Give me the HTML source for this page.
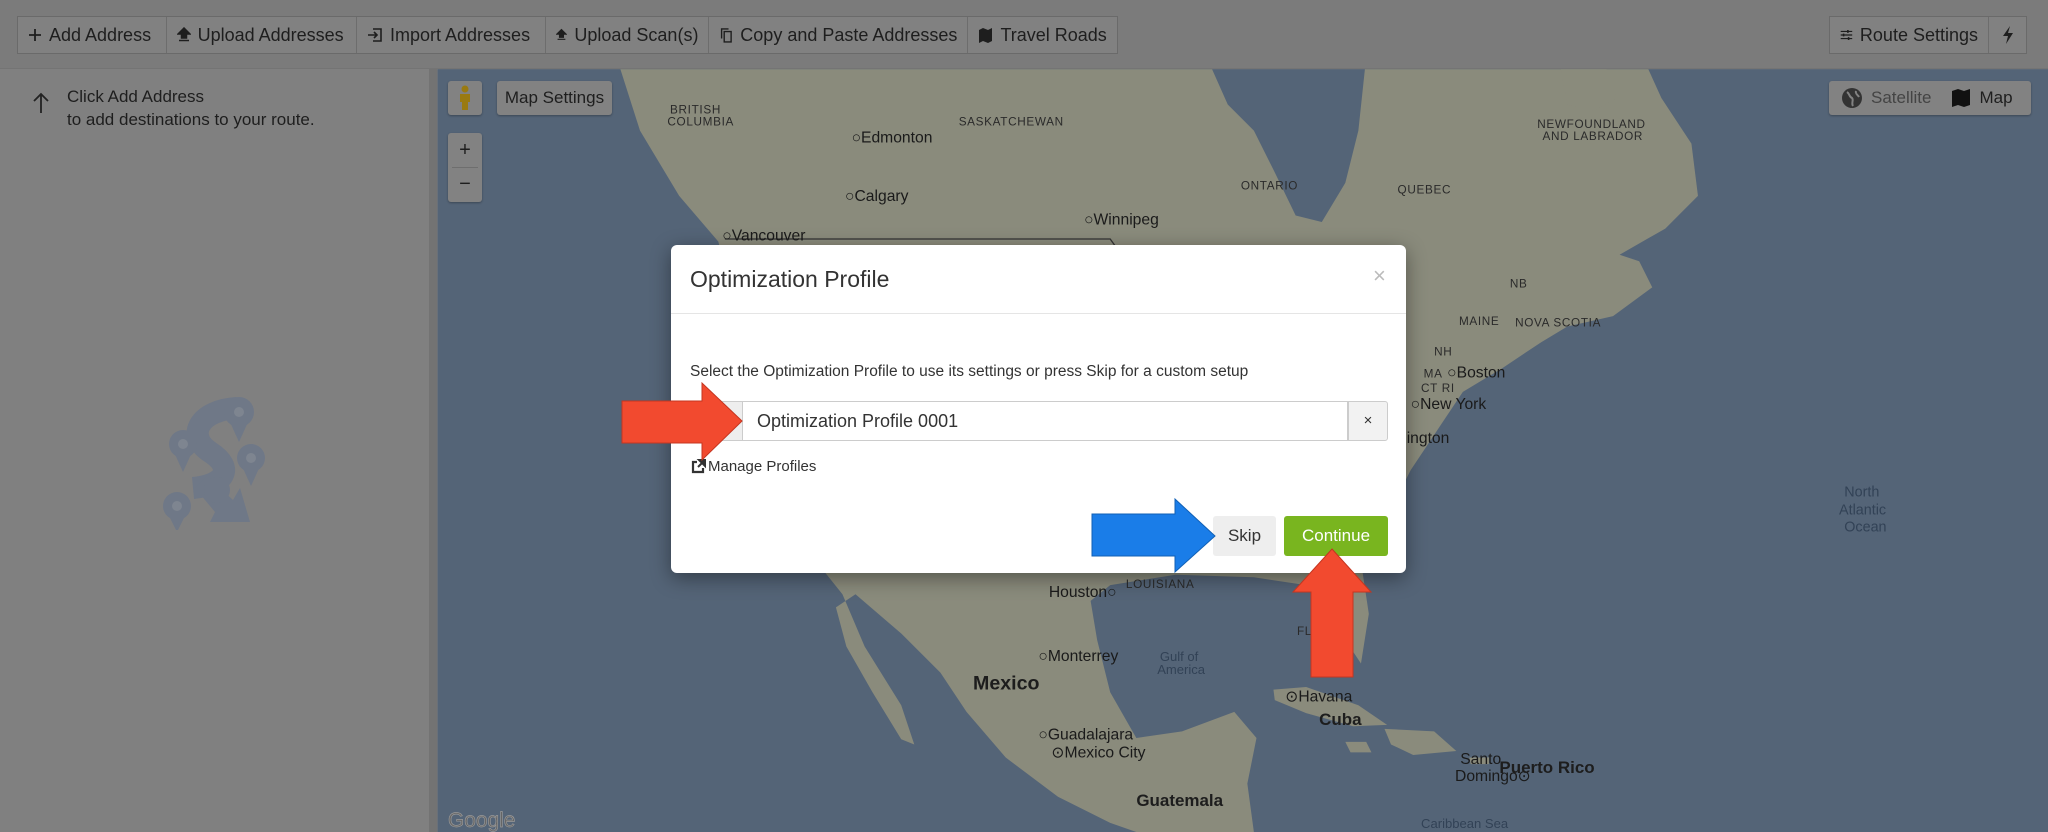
<!DOCTYPE html>
<html><head><meta charset="utf-8"><style>
*{box-sizing:border-box;margin:0;padding:0}
body{width:2048px;height:832px;overflow:hidden;background:#7b7b7b;font-family:"Liberation Sans",sans-serif;position:relative;color:#1c1c1c}
.abs{position:absolute}
.tb{position:absolute;top:16px;height:38px;background:#818181;border:1px solid #6a6a6a;display:flex}
.tb div{display:flex;align-items:center;padding:0 10px;font-size:18px;border-right:1px solid #6d6d6d;height:100%;white-space:nowrap;color:#1e1e1e}
.tb div:last-child{border-right:none}
.tb svg{margin-right:7px}
.mbtn{position:absolute;background:#828282;border-radius:3px;box-shadow:0 1px 2px rgba(0,0,0,.3);display:flex;align-items:center;justify-content:center;font-size:17px;color:#1e1e1e}
.lbl{font-family:"Liberation Sans",sans-serif;fill:#1d1d1d}
.st{font-size:9px;letter-spacing:.5px;fill:#2a2a2a}
.city{font-size:12px;fill:#1a1a1a}
</style></head><body>
<!-- toolbar -->
<div class="tb" style="left:17px;width:1101px">
<div style="width:149px"><svg width="14" height="14" viewBox="0 0 14 14"><path d="M7 1V13M1 7H13" stroke="#1e1e1e" stroke-width="1.8"/></svg>Add Address</div>
<div style="width:191px"><svg width="14" height="16" viewBox="0 0 14 16"><path d="M7 1L1 7H4.5V11H9.5V7H13Z M2 13.5H12" fill="#1e1e1e" stroke="#1e1e1e" stroke-width="1.5"/></svg>Upload Addresses</div>
<div style="width:190px"><svg width="16" height="16" viewBox="0 0 16 16"><path d="M6 2H14V14H6M1 8H10M7 5L10 8L7 11" fill="none" stroke="#1e1e1e" stroke-width="1.6"/></svg>Import Addresses</div>
<div style="width:163px"><svg width="14" height="16" viewBox="0 0 14 16"><path d="M7 1L1 7H4.5V11H9.5V7H13Z M2 13.5H12" fill="#1e1e1e" stroke="#1e1e1e" stroke-width="1.5"/></svg>Upload Scan(s)</div>
<div style="width:259px"><svg width="16" height="18" viewBox="0 0 16 18"><path d="M3 13V2H11M6 5H14V17H6Z" fill="none" stroke="#1e1e1e" stroke-width="1.6"/></svg>Copy and Paste Addresses</div>
<div style="width:149px"><svg width="15" height="17" viewBox="0 0 15 17"><path d="M1 3L5 1L10 3L14 1V14L10 16L5 14L1 16Z" fill="#1e1e1e"/></svg>Travel Roads</div>
</div>
<div class="tb" style="left:1829px;width:198px">
<div style="width:159px"><svg width="18" height="16" viewBox="0 0 18 16"><path d="M1 3H17M1 8H17M1 13H17" stroke="#1e1e1e" stroke-width="1.6"/><path d="M11 1V5M5 6V10M12 11V15" stroke="#1e1e1e" stroke-width="2.2"/></svg>Route Settings</div>
<div style="width:39px;justify-content:center;padding:0"><svg width="12" height="18" viewBox="0 0 12 18" style="margin:0"><path d="M8 0L1 10H6L4 18L11 7H6Z" fill="#1e1e1e"/></svg></div>
</div>
<div class="abs" style="left:0;top:68px;width:2048px;height:1px;background:#747474"></div>
<!-- sidebar -->
<div class="abs" style="left:0;top:69px;width:429px;height:763px;background:#808080"></div>
<div class="abs" style="left:429px;top:69px;width:8px;height:763px;background:#737373"></div>
<svg class="abs" style="left:32px;top:92px" width="18" height="22" viewBox="0 0 18 22"><path d="M9 21V2M2 9L9 2L16 9" fill="none" stroke="#222" stroke-width="1.8"/></svg>
<div class="abs" style="left:67px;top:85px;font-size:17px;line-height:23px;color:#1e1e1e">Click Add Address<br>to add destinations to your route.</div>
<svg class="abs" style="left:155px;top:380px" width="120" height="150" viewBox="0 0 120 150">
<g fill="#6f7887" stroke="none">
<path d="M82 28 C45 30 30 55 55 72 C80 88 70 105 38 108" fill="none" stroke="#6f7887" stroke-width="22"/>
<path d="M40 108 L60 132 L55 142 L95 142 L85 108 L78 120 L52 96Z"/>
<circle cx="28" cy="64" r="14"/><circle cx="84" cy="32" r="15"/><circle cx="96" cy="78" r="14"/><circle cx="62" cy="110" r="13"/><circle cx="22" cy="126" r="14"/>
<path d="M18 70 L28 92 L38 70Z M74 40 L84 62 L94 40Z M86 84 L96 106 L106 84Z M12 132 L22 152 L32 132Z"/>
</g>
<g fill="#7e8590"><circle cx="28" cy="64" r="5"/><circle cx="84" cy="32" r="5"/><circle cx="96" cy="78" r="5"/><circle cx="22" cy="126" r="5"/></g>
</svg>
<!-- map -->
<svg class="abs" style="left:0;top:0" width="2048" height="832" viewBox="0 0 1568 637" preserveAspectRatio="none">
<rect x="335" y="53" width="1233" height="584" fill="#546477"/>
<path fill="#8a8b7c" d="M475 53 L490 100 L520 150 L550 185 L560 230 L575 280 L590 330 L605 380 L625 430 L645 455 L662 495 L690 540 L700 570 L690 566 L668 530 L648 495 L640 465 L655 455 L690 485 L720 515 L740 545 L770 580 L810 610 L850 630 L870 637 L960 637 L955 600 L962 565 L945 545 L905 560 L870 565 L850 530 L840 490 L835 460 L850 448 L900 440 L960 442 L1000 448 L1022 455 L1030 490 L1042 508 L1048 470 L1042 430 L1060 400 L1080 360 L1100 330 L1120 300 L1150 282 L1180 262 L1200 250 L1235 242 L1265 220 L1255 200 L1240 195 L1275 175 L1300 150 L1295 110 L1272 75 L1262 53 L1045 53 L1040 100 L1030 140 L1012 170 L992 165 L975 130 L960 100 L940 80 L928 53 Z"/>
<path fill="#8a8b7c" d="M975 528 L1000 526 L1040 540 L1062 555 L1036 556 L1000 546 L976 536Z"/>
<path fill="#8a8b7c" d="M1060 558 L1098 560 L1115 575 L1082 578 L1065 570Z"/>
<path fill="#8a8b7c" d="M1030 568 L1046 568 L1050 576 L1034 576Z"/>
<path fill="#8a8b7c" d="M1125 580 L1140 580 L1140 585 L1126 585Z"/>
<path fill="#8a8b7c" d="M1195 53 L1230 53 L1238 75 L1220 85 L1200 80Z"/>
<path d="M555 183 L850 183 L855 190" stroke="#333" fill="none" stroke-width="1"/>
<text class="lbl st" x="513" y="87">BRITISH</text><text class="lbl st" x="511" y="96">COLUMBIA</text>
<text class="lbl st" x="734" y="96">SASKATCHEWAN</text>
<text class="lbl city" x="652" y="109">○Edmonton</text>
<text class="lbl city" x="647" y="154">○Calgary</text>
<text class="lbl city" x="830" y="172">○Winnipeg</text>
<text class="lbl city" x="553" y="184">○Vancouver</text>
<text class="lbl st" x="950" y="145">ONTARIO</text>
<text class="lbl st" x="1070" y="148">QUEBEC</text>
<text class="lbl st" x="1177" y="98">NEWFOUNDLAND</text><text class="lbl st" x="1181" y="107">AND LABRADOR</text>
<text class="lbl st" x="1156" y="220">NB</text><text class="lbl st" x="1160" y="250">NOVA SCOTIA</text>
<text class="lbl st" x="1117" y="249">MAINE</text>
<text class="lbl st" x="1098" y="272">NH</text><text class="lbl st" x="1090" y="289">MA</text><text class="lbl st" x="1088" y="300">CT RI</text>
<text class="lbl city" x="1108" y="289">○Boston</text>
<text class="lbl city" x="1080" y="313">○New York</text>
<text class="lbl city" x="1077" y="339">ington</text>
<text class="lbl" x="1412" y="380" font-size="11" style="fill:#324256">North</text>
<text class="lbl" x="1408" y="394" font-size="11" style="fill:#324256">Atlantic</text>
<text class="lbl" x="1412" y="407" font-size="11" style="fill:#324256">Ocean</text>
<text class="lbl st" x="862" y="450">LOUISIANA</text>
<text class="lbl city" x="803" y="457">Houston○</text>
<text class="lbl city" x="795" y="506">○Monterrey</text>
<text class="lbl" x="745" y="528" font-size="15" font-weight="bold">Mexico</text>
<text class="lbl city" x="795" y="566">○Guadalajara</text>
<text class="lbl city" x="805" y="580">⊙Mexico City</text>
<text class="lbl" x="888" y="506" font-size="10" style="fill:#324256">Gulf of</text>
<text class="lbl" x="886" y="516" font-size="10" style="fill:#324256">America</text>
<text class="lbl st" x="993" y="486">FLOR</text>
<text class="lbl city" x="984" y="537">⊙Havana</text>
<text class="lbl" x="1010" y="555" font-size="13" font-weight="bold">Cuba</text>
<text class="lbl city" x="1118" y="585">Santo</text><text class="lbl city" x="1114" y="598">Domingo⊙</text>
<text class="lbl" x="1148" y="592" font-size="13" font-weight="bold">Puerto Rico</text>
<text class="lbl" x="870" y="617" font-size="13" font-weight="bold">Guatemala</text>
<text class="lbl" x="1088" y="634" font-size="10" style="fill:#324256">Caribbean Sea</text>
<text class="lbl" x="343" y="633" font-size="16" style="fill:#666;stroke:#999;stroke-width:.5">Google</text>
</svg>
<!-- map controls -->
<div class="mbtn" style="left:448px;top:81px;width:34px;height:34px"><svg width="14" height="26" viewBox="0 0 14 26"><circle cx="7" cy="4" r="3.5" fill="#9a7a10"/><path d="M2 9H12V17H10V25H4V17H2Z" fill="#9a7a10"/></svg></div>
<div class="mbtn" style="left:497px;top:81px;width:115px;height:34px">Map Settings</div>
<div class="mbtn" style="left:448px;top:133px;width:34px;height:69px;flex-direction:column;font-size:20px"><span style="height:33px;line-height:33px">+</span><span style="width:26px;height:1px;background:#6e6e6e"></span><span style="height:33px;line-height:33px">−</span></div>
<div class="mbtn" style="left:1829px;top:81px;width:202px;height:34px;justify-content:flex-start;font-size:17px">
<svg style="margin-left:12px" width="22" height="22" viewBox="0 0 22 22"><circle cx="11" cy="11" r="10" fill="#333"/><path d="M6 5C9 7 8 10 11 11C13 13 10 16 12 19M15 4C14 7 17 8 18 10" stroke="#828282" stroke-width="2" fill="none"/></svg><span style="margin-left:8px;color:#444">Satellite</span><svg style="margin-left:20px" width="20" height="20" viewBox="0 0 20 20"><path d="M1 3L7 1L13 3L19 1V17L13 19L7 17L1 19Z" fill="#111"/></svg><span style="margin-left:8px">Map</span></div>
<!-- modal -->
<div class="abs" style="left:671px;top:245px;width:735px;height:328px;background:#fff;border-radius:6px;box-shadow:0 5px 20px rgba(0,0,0,.4)">
<div class="abs" style="left:19px;top:21px;font-size:23px;color:#333">Optimization Profile</div>
<div class="abs" style="left:702px;top:18px;font-size:22px;color:#bbb">×</div>
<div class="abs" style="left:0;top:68px;width:735px;height:1px;background:#e5e5e5"></div>
<div class="abs" style="left:19px;top:118px;font-size:15.5px;color:#333">Select the Optimization Profile to use its settings or press Skip for a custom setup</div>
<div class="abs" style="left:19px;top:156px;width:678px;height:40px;border:1px solid #ccc;border-radius:3px;background:#eee"></div>
<div class="abs" style="left:71px;top:156px;width:606px;height:40px;border:1px solid #ccc;background:#fff;font-size:18px;color:#333;padding:9px 0 0 14px">Optimization Profile 0001</div>
<div class="abs" style="left:677px;top:156px;width:40px;height:40px;border:1px solid #ccc;border-radius:0 3px 3px 0;background:#f2f2f2;font-size:15px;text-align:center;line-height:38px;color:#333">×</div>
<svg class="abs" style="left:19px;top:214px" width="16" height="16" viewBox="0 0 16 16"><path d="M7 3H3V13H13V9" fill="none" stroke="#333" stroke-width="2.2"/><path d="M9 1H15V7Z M14 2L8 8" fill="#333" stroke="#333" stroke-width="2"/></svg>
<div class="abs" style="left:37px;top:213px;font-size:15px;color:#333">Manage Profiles</div>
<div class="abs" style="left:542px;top:271px;width:63px;height:40px;background:#eee;border-radius:3px;font-size:17px;text-align:center;line-height:40px;color:#333">Skip</div>
<div class="abs" style="left:613px;top:271px;width:104px;height:40px;background:#79b51f;border-radius:3px;font-size:17px;text-align:center;line-height:40px;color:#fff">Continue</div>
</div>
<!-- arrows -->
<svg class="abs" style="left:0;top:0" width="2048" height="832">
<path d="M622 401 L702 401 L702 383 L742 421 L702 460 L702 443 L622 443Z" fill="#f24a2f" stroke="#c43520" stroke-width="1"/>
<path d="M1092 514 L1175 514 L1175 499 L1215 536 L1175 572 L1175 556 L1092 556Z" fill="#1a7de8" stroke="#1160b5" stroke-width="1"/>
<path d="M1332 549 L1371 592 L1353 592 L1353 677 L1311 677 L1311 592 L1293 592Z" fill="#f24a2f" stroke="#c43520" stroke-width="1"/>
</svg>
</body></html>
